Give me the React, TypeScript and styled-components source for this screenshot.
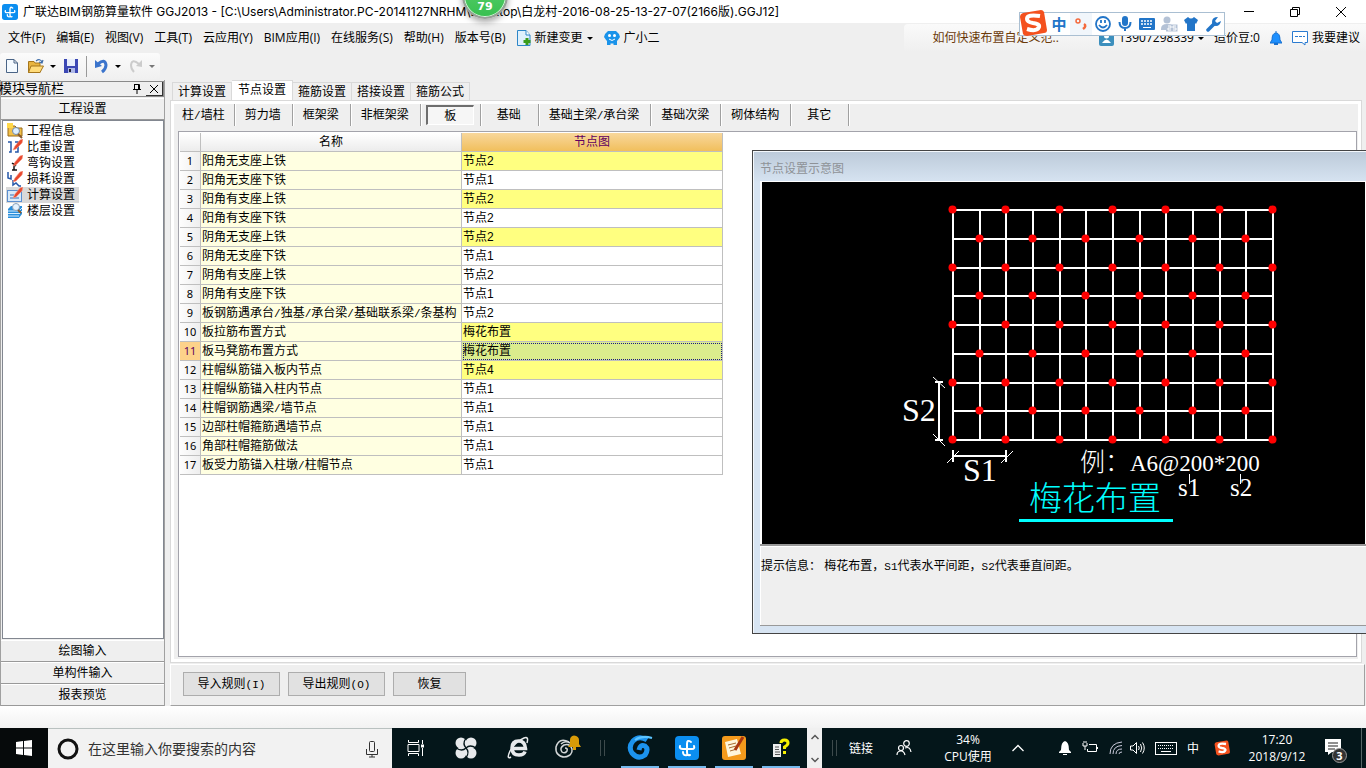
import React from "react";
import styled, { createGlobalStyle, css } from "styled-components";

const ui = `"Open Sans", "Noto Sans CJK SC", sans-serif`;
const song = `"Liberation Sans", "Noto Sans CJK SC", sans-serif`;

const Global = createGlobalStyle`
  * { box-sizing: border-box; }
  body { margin: 0; background: #efefef; color: #000; font: 12px/16px ${song}; }
  button { margin: 0; padding: 0; border: 0; background: none; color: inherit; font: inherit; white-space: nowrap; }
  svg { display: block; flex: none; }
`;

const Screen = styled.div`
  position: relative;
  display: flex;
  flex-direction: column;
  min-height: 100vh;
  overflow: hidden;
`;

/* Title bar */
const TitleBar = styled.header`
  display: flex;
  align-items: center;
  height: 23px;
  padding: 0 2px;
  background: #fff;
`;
const Title = styled.h1`
  flex: 1;
  margin: 0 0 0 5px;
  font: 12px/16px "Inter", "Noto Sans CJK SC", sans-serif;
  white-space: nowrap;
`;
const WindowButton = styled.button`
  display: flex;
  justify-content: center;
  width: 46px;
`;
const Ball = styled.div`
  position: absolute;
  top: -27px;
  left: 462px;
  z-index: 3;
  width: 46px;
  height: 46px;
  padding-top: 24px;
  border: 2px solid #9a9f9a;
  border-radius: 50%;
  background: linear-gradient(#5fd070, #38c050);
  box-shadow: 0 3px 6px rgba(0, 0, 0, 0.35), inset 0 0 0 1px #d8f5dc;
  color: #fff;
  font: bold 11px/16px "DejaVu Sans", sans-serif;
  text-align: center;
`;

/* Menu bar */
const MenuBar = styled.nav`
  display: flex;
  align-items: center;
  gap: 1px;
  height: 30px;
  padding-left: 3px;
  font: 12px/16px ${ui};
`;
const MenuItem = styled.button`
  display: flex;
  align-items: center;
  gap: 4px;
  padding: 0 5px;
`;
const Account = styled.div`
  display: flex;
  align-items: center;
  height: 28px;
  margin-left: auto;
  padding: 0 1px 0 23px;
  border-radius: 4px 0 0 0;
  background: linear-gradient(#fafafa, #efefef);
`;
const News = styled.a`
  width: 167px;
  padding-left: 5px;
  color: #6b3a0a;
  text-decoration: none;
  white-space: nowrap;
`;

const Caret = styled.span<{ $dim?: boolean }>`
  width: 0;
  border: 3px solid transparent;
  border-top-color: ${(p) => (p.$dim ? "#777" : "#000")};
  border-bottom: 0;
`;

/* Tool bar */
const ToolBar = styled.div`
  display: flex;
  align-items: center;
  align-self: flex-start;
  gap: 8px;
  height: 26px;
  margin-bottom: 1px;
  padding: 0 5px 0 4px;
  border-radius: 3px;
  background: linear-gradient(#fbfbfb, #f0f0f0);
`;
const Tool = styled.button`
  display: flex;
  align-items: center;
  gap: 6px;
`;
const ToolRule = styled.span`
  width: 1px;
  height: 21px;
  background: #999;
`;

/* Sogou input bar */
const ImeBar = styled.div`
  position: absolute;
  top: 12px;
  right: 141px;
  z-index: 3;
  display: flex;
  align-items: center;
  height: 24px;
  padding: 0 0 0 28px;
  border: 1px solid #aabfd2;
  background: #fff;
  color: #2275c8;
`;
const ImeLogo = styled.span`
  position: absolute;
  top: -4px;
  left: -1px;
`;
const ImeKey = styled.button<{ $tint?: boolean }>`
  display: flex;
  align-items: center;
  justify-content: center;
  width: 22px;
  height: 22px;
  background: ${(p) => (p.$tint ? "#f1f6fb" : "none")};
  font: bold 15px/22px "Noto Sans CJK SC", sans-serif;
`;

/* Body */
const Body = styled.div`
  display: flex;
  flex: 1;
  min-height: 0;
`;
const Side = styled.aside`
  display: flex;
  flex-direction: column;
  width: 165px;
  padding-top: 1px;
  border-right: 1px solid #a0a0a0;
  border-left: 1px solid #a0a0a0;
`;
const SideHead = styled.div`
  display: flex;
  align-items: center;
  height: 16px;
  margin-bottom: 1px;
  border: 1px solid #8a8a8a;
  border-left: 0;
  font: 13px/16px ${song};
`;
const SideName = styled.span`
  flex: 1;
  margin-left: -2px;
`;
const CloseBox = styled.button`
  display: flex;
  align-items: center;
  justify-content: center;
  width: 17px;
  height: 14px;
  margin-left: 5px;
  border: solid #333;
  border-width: 0 1px 1px 0;
`;
const Section = styled.button`
  height: 22px;
  border-top: 1px solid #fff;
  border-bottom: 1px solid #999;
  text-align: center;
`;
const Modules = styled.ul`
  flex: 1;
  margin: 0 0 1px 1px;
  padding: 2px 3px;
  border: 1px solid #828790;
  background: #fff;
  list-style: none;
`;
const Module = styled.button<{ $on?: boolean }>`
  display: flex;
  align-items: center;
  gap: 4px;
  height: 16px;
  padding: 0 4px 0 1px;
  background: ${(p) => (p.$on ? "#d9d9d9" : "none")};
`;
const Work = styled.main`
  position: relative;
  display: flex;
  flex: 1;
  flex-direction: column;
  min-width: 0;
  padding: 0 1px 0 5px;
`;
const Tabs = styled.div`
  display: flex;
  align-items: flex-end;
  height: 20px;
  padding-left: 2px;
`;
const Tab = styled.button<{ $on?: boolean }>`
  height: 18px;
  padding: 1px 5px 0;
  border: 1px solid #d9d9d9;
  border-bottom: 0;
  border-left-width: 0;
  &:first-child { border-left-width: 1px; }
  ${(p) =>
    p.$on &&
    css`
      height: 20px;
      padding: 0 6px 2px;
      background: #fff;
    `}
`;
const Page = styled.section`
  display: flex;
  flex: 1;
  flex-direction: column;
  margin-right: 3px;
  border: 1px solid #d9d9d9;
  outline: 3px solid #fff;
  outline-offset: -4px;
  padding: 3px 4px 5px 7px;
`;
const Kinds = styled.div`
  display: flex;
  height: 22px;
  margin: 0 0 5px -4px;
`;
const KindCell = styled.div`
  display: flex;
  align-items: center;
  justify-content: center;
  min-width: 58px;
  padding: 0 11px 0 10px;
  border-right: 1px solid #a0a0a0;
  box-shadow: 1px 0 #fff;
  white-space: nowrap;
  &:first-child { padding: 0 9px 0 8px; }
`;
const Kind = styled.button<{ $on?: boolean }>`
  ${(p) =>
    p.$on &&
    css`
      width: 48px;
      height: 20px;
      margin: 0 -5px;
      border: 1px solid #fff;
      border-top: 2px solid #6e6e6e;
      border-left: 2px solid #6e6e6e;
      background: #f6f6f6;
    `}
`;
const Canvas = styled.div`
  flex: 1;
  padding: 1px;
  border: 1px solid #a3a3ab;
  background: #fff;
`;

/* Node table */
const Table = styled.table`
  width: 543px;
  border-collapse: separate;
  border-spacing: 0;
  table-layout: fixed;
`;
const HeadCell = styled.th<{ $w: number; $hot?: boolean }>`
  width: ${(p) => p.$w}px;
  height: 19px;
  padding: 0;
  border-right: 1px solid #bfbfbf;
  border-bottom: 1px solid #bfbfbf;
  background: ${(p) => (p.$hot ? "linear-gradient(#f8d79c, #f1bf5c)" : "linear-gradient(#fff, #ececec)")};
  color: ${(p) => (p.$hot ? "#600060" : "#000")};
  font-weight: normal;
`;
const RowNo = styled.th<{ $hot?: boolean }>`
  height: 19px;
  padding: 0;
  border-right: 1px solid #bfbfbf;
  border-bottom: 1px solid #bfbfbf;
  background: ${(p) => (p.$hot ? "#fdd28a" : "linear-gradient(90deg, #fdfdfd, #eee)")};
  color: ${(p) => (p.$hot ? "#600060" : "#000")};
  font: 11px/16px "Noto Sans", sans-serif;
`;
const Cell = styled.td<{ $fill: string; $focus?: boolean }>`
  height: 19px;
  padding: 0 0 0 1px;
  overflow: hidden;
  border-right: 1px solid #bfbfbf;
  border-bottom: 1px solid #bfbfbf;
  background: ${(p) => p.$fill};
  outline: ${(p) => (p.$focus ? "1px dotted #1a1a80" : "none")};
  outline-offset: -2px;
  white-space: nowrap;
`;

const Actions = styled.footer`
  display: flex;
  gap: 8px;
  margin: 1px 0 0;
  padding: 7px 12px 9px;
  border: 1px solid #a0a0a0;
  border-top-color: #fff;
  border-left-color: #fff;
`;
const Action = styled.button<{ $w: number }>`
  width: ${(p) => p.$w}px;
  height: 24px;
  border: 1px solid #adadad;
  background: #e1e1e1;
`;
const Half = styled.span`
  font: 11px/16px "Liberation Mono", monospace;
`;

/* Node preview window */
const Preview = styled.section`
  position: absolute;
  top: 70px;
  right: 0;
  left: 587px;
  padding: 1px 0 7px 7px;
  border: 1px solid #444;
  border-right: 0;
  background: linear-gradient(#bccad9, #d7e4f2 32px);
  box-shadow: inset 1px 1px #f4f8fc;
`;
const PreviewTitle = styled.h2`
  height: 29px;
  margin: 0;
  padding-top: 9px;
  color: #8e9297;
  font: 12px/16px ${song};
`;
const Board = styled.div`
  overflow: hidden;
  border: solid #fff;
  border-width: 1px 1px 0 2px;
  background: #000;
`;
const Hint = styled.p`
  height: 82px;
  margin: 0;
  padding: 12px 0 0 1px;
  border-top: 2px solid #999;
  border-bottom: 1px solid #999;
  background: #efefef;
  box-shadow: inset 1px 1px #fff;
`;

/* Task bar */
const Strip = styled.div`
  height: 22px;
  background: linear-gradient(#fff, #f2f2f2);
`;
const TaskBar = styled.footer`
  display: flex;
  height: 40px;
  background: #04161a;
  color: #fff;
  font: 12px/17px ${ui};
`;
const Start = styled.button`
  display: flex;
  flex: none;
  align-items: center;
  justify-content: center;
  width: 48px;
  background: #060a0b;
`;
const Search = styled.label`
  display: flex;
  flex: none;
  align-items: center;
  gap: 8px;
  width: 344px;
  padding: 0 13px 0 8px;
  border-top: 1px solid #b9c1c0;
  background: #f2f2f2;
  input {
    flex: 1;
    min-width: 0;
    border: 0;
    padding: 0;
    outline: 0;
    background: none;
    font: 14px/20px ${ui};
  }
  input::placeholder { color: #333; opacity: 1; }
`;
const Launch = styled.button<{ $w: number; $run?: boolean }>`
  display: flex;
  flex: none;
  align-items: center;
  justify-content: center;
  width: ${(p) => p.$w}px;
  margin-right: ${(p) => (p.$run ? 9 : 0)}px;
  box-shadow: ${(p) => (p.$run ? "inset 0 -2px #76b9ed" : "none")};
`;
const Grip = styled.span<{ $l: number; $r: number }>`
  flex: none;
  align-self: center;
  width: 5px;
  height: 16px;
  margin: 0 ${(p) => p.$r}px 0 ${(p) => p.$l}px;
  border: solid #3d4a4c;
  border-width: 0 1px;
`;
const Scroller = styled.div`
  display: flex;
  flex: none;
  flex-direction: column;
  align-items: center;
  justify-content: space-between;
  width: 15px;
  margin-left: -2px;
  padding: 6px 0 5px;
  background: #f0f0f0;
`;
const Tray = styled.div`
  display: flex;
  flex: 1;
  align-items: center;
  justify-content: flex-end;
  padding-right: 5px;
`;
const TrayItem = styled.button<{ $w: number; $gap?: number }>`
  display: flex;
  flex: none;
  justify-content: center;
  width: ${(p) => p.$w}px;
  margin-left: ${(p) => p.$gap ?? 0}px;
  text-align: center;
  white-space: pre;
`;
const Notices = styled.button`
  position: relative;
  height: 40px;
  margin-left: 13px;
  padding: 0 18px 0 1px;
  border-right: 1px solid #566;
`;
const Count = styled.span`
  position: absolute;
  top: 20px;
  left: 8px;
  width: 15px;
  height: 15px;
  border: 1px solid #999;
  border-radius: 50%;
  background: #333;
  font: bold 11px/13px ${ui};
`;

const Glodon = ({ s }: { s: number }) => (
  <svg width={s} height={s} viewBox="0 0 24 24">
    <rect width="24" height="24" rx="4" fill="#0b8ef0" />
    <path d="M16 6Q12 3 12 8V16Q12 20 15 19M5 10Q4 13 8 13H17Q20 13 19 10M12 19Q8 20 8 16" fill="none" stroke="#fff" strokeWidth="2" strokeLinecap="round" />
  </svg>
);
const SogouS = ({ s }: { s: number }) => (
  <svg width={s} height={s} viewBox="0 0 28 28">
    <path d="M4 4L22 1Q24 1 25 3L28 21Q28 24 25 24L8 27Q5 27 4 25L1 8Q1 5 4 4Z" fill="#f4511e" />
    <path d="M21 7Q8 5 8 10Q8 13 14 14Q21 15 20 18Q18 23 8 20" fill="none" stroke="#fff" strokeWidth="4" />
  </svg>
);
const Pencil = () => <path d="M6 11L8 7L13 1L16 0L15 4L9 10Z" fill="#e8482e" stroke="#f79a86" strokeWidth="0.600" />;

/* Slashes take the half-width cell that they have in a Song typeface */
const Label = ({ text }: { text: string }) => (
  <>
    {text.split(/(\/)/).map((part, i) => (part === "/" ? <Half key={i}>/</Half> : part))}
  </>
);

const moduleIcons = [
  <g key="a"><path d="M1 3H8L10 5H15V13H1Z" fill="#f2c14a" stroke="#9a6b16" /><path d="M0 0H6V5H0Z" fill="#ffd84a" /><circle cx="9" cy="8" r="3.500" fill="#dcefff" stroke="#7388a5" /><path d="M11 11L15 15" stroke="#8a5a2a" strokeWidth="2" /></g>,
  <g key="b"><path d="M1 3H4V13H2M8 3H11V13H8" fill="none" stroke="#2457a8" strokeWidth="1.500" /><Pencil /></g>,
  <g key="c"><path d="M7 8V15M5 15H10M5 8L9 11" fill="none" stroke="#111" strokeWidth="1.500" /><Pencil /></g>,
  <g key="d"><path d="M1 1V7L4 8V4M6 9V14L9 12L12 15H14" fill="none" stroke="#2457a8" strokeWidth="1.500" /><Pencil /></g>,
  <g key="e"><rect x="0.500" y="3.500" width="14" height="11" fill="#d8eafa" stroke="#5b8fd0" /><path d="M3 8H7M3 11H12" stroke="#3a70b8" /><Pencil /></g>,
  <g key="f"><path d="M1 6L4 3H15V11L12 15H1Z" fill="#2b8fdc" /><path d="M1 8H12M1 10.500H12M1 13H12M12 8L15 5M12 11L15 8" stroke="#d8efff" /><circle cx="9" cy="4" r="3.500" fill="#e4f3ff" stroke="#8aa0b8" /><path d="M11 7L14 10" stroke="#8a5a2a" strokeWidth="2" /></g>,
];

const menus = ["文件(F)", "编辑(E)", "视图(V)", "工具(T)", "云应用(Y)", "BIM应用(I)", "在线服务(S)", "帮助(H)", "版本号(B)"];
const modules = ["工程信息", "比重设置", "弯钩设置", "损耗设置", "计算设置", "楼层设置"];
const tabs = ["计算设置", "节点设置", "箍筋设置", "搭接设置", "箍筋公式"];
const kinds = ["柱/墙柱", "剪力墙", "框架梁", "非框架梁", "板", "基础", "基础主梁/承台梁", "基础次梁", "砌体结构", "其它"];
const rows: [string, string, boolean?][] = [
  ["阳角无支座上铁", "节点2", true],
  ["阳角无支座下铁", "节点1"],
  ["阳角有支座上铁", "节点2", true],
  ["阳角有支座下铁", "节点2"],
  ["阴角无支座上铁", "节点2", true],
  ["阴角无支座下铁", "节点1"],
  ["阴角有支座上铁", "节点2"],
  ["阴角有支座下铁", "节点1"],
  ["板钢筋遇承台/独基/承台梁/基础联系梁/条基构", "节点2"],
  ["板拉筋布置方式", "梅花布置", true],
  ["板马凳筋布置方式", "梅花布置", true],
  ["柱帽纵筋锚入板内节点", "节点4", true],
  ["柱帽纵筋锚入柱内节点", "节点1"],
  ["柱帽钢筋遇梁/墙节点", "节点1"],
  ["边部柱帽箍筋遇墙节点", "节点1"],
  ["角部柱帽箍筋做法", "节点1"],
  ["板受力筋锚入柱墩/柱帽节点", "节点1"],
];

const gx = (i: number) => 191 + Math.round((i * 80) / 3);
const gy = (j: number) => 28 + Math.round((j * 115) / 4);
const range = (n: number) => Array.from({ length: n }, (_, i) => i);

const Diagram = () => (
  <svg width="603" height="362" viewBox="0 0 603 362" fontFamily={`"Liberation Serif", "Noto Sans CJK SC", serif`} fill="#fff">
    <g stroke="#fff" strokeWidth="2">
      {range(13).map((i) => <path key={i} d={`M${gx(i)} 27V259`} />)}
      {range(9).map((j) => <path key={j} d={`M190 ${gy(j)}H512`} />)}
      <path d="M177 200V258M173 200H181M173 258H181M191 274H244M191 268V280M244 268V280" />
    </g>
    <path d="M171 195L183 206M171 252L183 264M185 281L197 269M239 281L251 269M427.500 292V302M478.500 292V302" stroke="#fff" />
    <g fill="#f00">
      {range(9).flatMap((j) =>
        range(13)
          .filter((i) => i % 2 === j % 2)
          .map((i) => <circle key={`${i}-${j}`} cx={gx(i) - 0.5} cy={gy(j) - 0.5} r="4" />)
      )}
    </g>
    <text x="140" y="239" fontSize="32">S2</text>
    <text x="201" y="299" fontSize="32">S1</text>
    <text x="318" y="289" fontSize="25" fontWeight="300">例：</text>
    <text x="368" y="289" fontSize="23">A6@200*200</text>
    <text x="416" y="314" fontSize="25">s1</text>
    <text x="468" y="314" fontSize="25">s2</text>
    <text x="267" y="328" fontSize="33" fontWeight="300" fill="#0ff">梅花布置</text>
    <path d="M257 338.500H411" stroke="#0ff" strokeWidth="3" />
  </svg>
);

export default function App() {
  return (
    <Screen>
      <Global />
      <TitleBar>
        <Glodon s={16} />
        <Title>广联达BIM钢筋算量软件 GGJ2013 - [C:\Users\Administrator.PC-20141127NRHM\Desktop\白龙村-2016-08-25-13-27-07(2166版).GGJ12]</Title>
        <WindowButton aria-label="最小化"><svg width="10" height="10"><path d="M0 4.500H10" stroke="#000" /></svg></WindowButton>
        <WindowButton aria-label="还原"><svg width="10" height="10" fill="none" stroke="#000"><path d="M.5 2.500H7.500V9.500H.5ZM2.500 2.500V.5H9.500V7.500H7.500" /></svg></WindowButton>
        <WindowButton aria-label="关闭"><svg width="10" height="10"><path d="M0 0L10 10M10 0L0 10" stroke="#000" /></svg></WindowButton>
      </TitleBar>
      <Ball>79</Ball>

      <ImeBar>
        <ImeLogo><SogouS s={28} /></ImeLogo>
        <ImeKey>中</ImeKey>
        <ImeKey $tint aria-label="标点"><svg width="12" height="14" fill="none" stroke="#f4693c"><circle cx="3" cy="4" r="2" strokeWidth="1.500" /><path d="M9 7Q12 9 8 12" strokeWidth="2.500" /></svg></ImeKey>
        <ImeKey aria-label="表情"><svg width="16" height="16" fill="none" stroke="#2275c8" strokeWidth="1.800"><circle cx="8" cy="8" r="7" /><path d="M4 9Q8 14 12 9M6 4V7M10 4V7" /></svg></ImeKey>
        <ImeKey aria-label="语音"><svg width="14" height="16"><rect x="4" width="6" height="10" rx="3" fill="#2275c8" /><path d="M1.500 6Q1.500 12 7 12T12.500 6M7 12V15" fill="none" stroke="#2275c8" strokeWidth="2" /></svg></ImeKey>
        <ImeKey aria-label="键盘"><svg width="16" height="12"><rect width="16" height="12" rx="1" fill="#2275c8" /><path d="M2 3H14M2 6H14" stroke="#fff" strokeWidth="1.500" strokeDasharray="2 1" /><path d="M4 9.500H12" stroke="#fff" /></svg></ImeKey>
        <ImeKey aria-label="账户"><svg width="17" height="16" fill="#b4c2d6"><circle cx="6" cy="4" r="3.500" /><path d="M0 13Q0 8 6 8Q11 8 12 10H5V14H0Z" /><path d="M5 8.500H16.500V15.500H5Z" /><path d="M7 10H10V12H7V14H10M15 10H12V12H15V14H12" fill="none" stroke="#fff" /></svg></ImeKey>
        <ImeKey aria-label="皮肤"><svg width="14" height="14"><path d="M4 0Q7 3 10 0L14 3L12 7L11 6V14H3V6L2 7L0 3Z" fill="#2275c8" /></svg></ImeKey>
        <ImeKey aria-label="工具"><svg width="15" height="15"><path d="M2 13L8 7" stroke="#2275c8" strokeWidth="3.500" strokeLinecap="round" /><path d="M12 0Q6 0 6 5Q6 9 10 9Q14 9 15 4L11 6L9 4Z" fill="#2275c8" /></svg></ImeKey>
      </ImeBar>

      <MenuBar>
        {menus.map((m) => <MenuItem key={m}>{m}</MenuItem>)}
        <MenuItem>
          <svg width="14" height="16"><path d="M.5.5H9L13 5V15.500H.5Z" fill="#dff0fc" stroke="#2d86c8" /><path d="M9 .5V5H13" fill="#fff" stroke="#2d86c8" /><path d="M10 8V15M6.500 11.500H13.500" stroke="#3a9c1c" strokeWidth="3" /></svg>
          新建变更
          <Caret />
        </MenuItem>
        <MenuItem>
          <svg width="16" height="16"><path d="M4 1H12Q15 3 16 7Q14 10 13 11V15H9.500V13.500H6.500V15H3V11Q2 10 0 7Q1 3 4 1Z" fill="#1a93ea" /><circle cx="5.500" cy="5.500" r="1.500" fill="#fff" /><circle cx="10.500" cy="5.500" r="1.500" fill="#fff" /><path d="M5 9Q8 12 11 9" fill="none" stroke="#fff" /></svg>
          广小二
        </MenuItem>
        <Account>
          <News href="#">如何快速布置自定义范..</News>
          <MenuItem>
            <svg width="15" height="15"><rect width="15" height="15" rx="2" fill="#3c8fbd" /><circle cx="7.500" cy="5" r="2.500" fill="#fff" /><path d="M3 12Q7.500 5 12 12Z" fill="#fff" /></svg>
            <span>13907298339</span>
            <Caret />
          </MenuItem>
          <MenuItem>造价豆:0</MenuItem>
          <MenuItem aria-label="提醒"><svg width="12" height="14"><path d="M6 0V2Q2 2 2 9L0 12H12L10 9Q10 2 6 2" fill="#1e90ff" stroke="#1670d0" /><path d="M4 13H8" stroke="#1670d0" strokeWidth="2" /></svg></MenuItem>
          <MenuItem><svg width="16" height="16" fill="none" stroke="#2b7bd0"><path d="M.5 1.500H15.500V12.500H13V15L10 12.500H.5Z" fill="#fff" /><path d="M3 6.500H13" strokeDasharray="3 1" /></svg>我要建议</MenuItem>
        </Account>
      </MenuBar>

      <ToolBar>
        <Tool aria-label="新建"><svg width="16" height="16"><path d="M2.500 1.500H10L13.500 5V14.500H2.500Z" fill="#f4faff" stroke="#4a6486" /><path d="M10 1.500V5H13.500" fill="none" stroke="#4a6486" /></svg></Tool>
        <Tool aria-label="打开"><svg width="16" height="16"><path d="M.5 3.500H6L7 5H12V14.500H.5Z" fill="#e8b440" stroke="#a5761c" /><path d="M3 8H15.500L12 14.500H.5Z" fill="#ffdb7a" stroke="#a5761c" /><path d="M8 3Q12 0 14 4M15 2L14 5L11 4" fill="none" stroke="#3d6ca8" strokeWidth="1.200" /></svg><Caret /></Tool>
        <Tool aria-label="保存"><svg width="14" height="16"><path d="M0 1H14V15H0Z" fill="#3c48b4" /><path d="M3 1H11V8H3Z" fill="#e8eefc" /><path d="M4 10H11V15H4Z" fill="#aeb8e8" /><path d="M5 11H7V14H5Z" fill="#223" /></svg></Tool>
        <ToolRule />
        <Tool aria-label="撤销"><svg width="14" height="16"><path d="M3 6Q10 0 11 7Q11 11 7 14" fill="none" stroke="#3b74cc" strokeWidth="3" /><path d="M0 2V10L7 8Z" fill="#3b74cc" /></svg><Caret /></Tool>
        <Tool aria-label="重做"><svg width="14" height="16"><path d="M10 6Q3 0 2 7Q2 11 5 14" fill="none" stroke="#ccc" strokeWidth="2" /><path d="M13 2V9L7 8Z" fill="#ccc" /></svg><Caret $dim /></Tool>
      </ToolBar>

      <Body>
        <Side>
          <SideHead>
            <SideName>模块导航栏</SideName>
            <svg width="8" height="10" fill="none" stroke="#000"><path d="M1 .5H6.500V5.500M1.500 .5V5.500M0 5.500H8M4 6V10M5.500 1V5" /></svg>
            <CloseBox aria-label="关闭"><svg width="8" height="8"><path d="M0 0L8 8M8 0L0 8" stroke="#000" /></svg></CloseBox>
          </SideHead>
          <Section>工程设置</Section>
          <Modules>
            {modules.map((m, i) => (
              <li key={m}>
                <Module $on={i === 4}><svg width="16" height="16">{moduleIcons[i]}</svg>{m}</Module>
              </li>
            ))}
          </Modules>
          <Section>绘图输入</Section>
          <Section>单构件输入</Section>
          <Section>报表预览</Section>
        </Side>

        <Work>
          <Tabs role="tablist">
            {tabs.map((t, i) => <Tab key={t} role="tab" aria-selected={i === 1} $on={i === 1}>{t}</Tab>)}
          </Tabs>
          <Page>
            <Kinds>
              {kinds.map((k) => <KindCell key={k}><Kind $on={k === "板"}><Label text={k} /></Kind></KindCell>)}
            </Kinds>
            <Canvas>
              <Table>
                <thead>
                  <tr>
                    <HeadCell $w={21} aria-label="序号" />
                    <HeadCell $w={261}>名称</HeadCell>
                    <HeadCell $w={261} $hot>节点图</HeadCell>
                  </tr>
                </thead>
                <tbody>
                  {rows.map(([name, node, changed], i) => (
                    <tr key={name}>
                      <RowNo $hot={i === 10}>{i + 1}</RowNo>
                      <Cell $fill="#ffffe1"><Label text={name} /></Cell>
                      <Cell $fill={i === 10 ? "#dbec8d" : changed ? "#ffff80" : "#fff"} $focus={i === 10}>{node}</Cell>
                    </tr>
                  ))}
                </tbody>
              </Table>
            </Canvas>
          </Page>
          <Actions>
            <Action $w={97}>导入规则<Half>(I)</Half></Action>
            <Action $w={97}>导出规则<Half>(O)</Half></Action>
            <Action $w={73}>恢复</Action>
          </Actions>
          <Preview>
            <PreviewTitle>节点设置示意图</PreviewTitle>
            <Board><Diagram /></Board>
            <Hint>提示信息： 梅花布置，<Half>S1</Half>代表水平间距，<Half>S2</Half>代表垂直间距。</Hint>
          </Preview>
        </Work>
      </Body>
      <Strip />

      <TaskBar>
        <Start aria-label="开始"><svg width="16" height="16" fill="#fff"><path d="M0 2L7 1V7.500H0ZM8 1L16 0V7.500H8ZM0 8.500H7V15L0 14ZM8 8.500H16V16L8 15Z" /></svg></Start>
        <Search>
          <svg width="24" height="24"><circle cx="12" cy="12" r="9" fill="none" stroke="#111" strokeWidth="3" /></svg>
          <input type="text" placeholder="在这里输入你要搜索的内容" aria-label="搜索" />
          <svg width="14" height="18" fill="none" stroke="#333"><rect x="4.500" y="1.500" width="5" height="10" rx="1" /><path d="M1.500 9V14.500H12.500V9M7 14V17M4 17H10" /></svg>
        </Search>
        <Launch $w={48} aria-label="任务视图"><svg width="18" height="16" fill="none" stroke="#fff"><path d="M1 4.500H12V11.500H1ZM1.500 0V2.500H11.500V0M1.500 16V13.500H11.500V16M15.500 0V4M15.500 8V16" /><path d="M14 4.500H17V7.500H14Z" fill="#fff" stroke="none" /></svg></Launch>
        <Launch $w={52} aria-label="浏览器"><svg width="22" height="22"><g fill="#e8eaec"><circle cx="6" cy="6" r="5.500" /><circle cx="16" cy="6" r="5.500" /><circle cx="6" cy="16" r="5.500" /><circle cx="16" cy="16" r="5.500" /><path d="M6 6H16V16H6Z" /></g><path d="M11 11Q7 7 11 1M11 11Q15 7 21 11M11 11Q15 15 11 21M11 11Q7 15 1 11" fill="none" stroke="#04161a" strokeWidth="1.300" /></svg></Launch>
        <Launch $w={52} aria-label="IE"><svg width="22" height="24" fill="none" stroke="#e8eaec"><path d="M5 12.500H18.500Q18 5 11.500 5Q5 5 5 12Q5 19 12 19Q17 19 18 15.500" strokeWidth="3.500" /><path d="M4 21Q-1 24 3 15Q8 6 17 2Q22 0 20 7" strokeWidth="1.500" /></svg></Launch>
        <Launch $w={48} aria-label="消息"><svg width="28" height="28" fill="none" stroke="#d4d7d8" strokeWidth="1.500"><path d="M15 8Q5 3 2 13Q1 22 10 23Q19 22 18 15Q16 9 10 11Q5 14 8 18Q11 20 13 17Q14 14 11 14M7 10Q11 6 16 9M3 19Q8 26 16 21" /><path d="M14 13L16 10V6Q16 2 20 1.500Q25 2 25 6V10L27 13ZM19 13H22V16H19Z" fill="#d89b08" stroke="none" /></svg></Launch>
        <Grip $l={8} $r={16} />
        <Launch $w={38} $run aria-label="广联达G"><svg width="26" height="26" fill="none"><path d="M20 5Q12 0 6 6Q1 12 5 18Q11 25 18 20Q22 14 18 11Q13 9 12 15" stroke="#1c93ee" strokeWidth="5" /><path d="M8 5Q15 0 25 3" stroke="#5cc4ff" strokeWidth="2" /></svg></Launch>
        <Launch $w={38} $run aria-label="钢筋算量"><Glodon s={24} /></Launch>
        <Launch $w={38} $run aria-label="记事"><svg width="24" height="24"><rect width="24" height="24" rx="3" fill="#f49a1c" /><path d="M3 6L15 3L19 18L6 21Z" fill="#fff6dc" /><path d="M6 9L14 7M7 12L14 10M8 15L15 13" stroke="#a66b30" /><path d="M21 1L13 14" stroke="#a83610" strokeWidth="3" /></svg></Launch>
        <Launch $w={38} $run aria-label="帮助"><svg width="18" height="20"><path d="M1 6H9V19H1Z" fill="#eee" /><path d="M3 9H7M3 11.500H7M3 14H8M3 16.500H8" stroke="#555" /><path d="M9 5Q9 2 12.500 2Q16 2 16 5Q16 7 12.500 9V11M12.500 13V16" fill="none" stroke="#f6f000" strokeWidth="3" /></svg></Launch>
        <Scroller>
          <svg width="8" height="6" fill="none" stroke="#555" strokeWidth="1.500"><path d="M.5 5L4 1.500L7.500 5" /></svg>
          <svg width="8" height="6" fill="none" stroke="#555" strokeWidth="1.500"><path d="M.5 1L4 4.500L7.500 1" /></svg>
        </Scroller>
        <Grip $l={10} $r={0} />
        <Tray>
          <TrayItem $w={48}>链接</TrayItem>
          <TrayItem $w={38} aria-label="人脉"><svg width="16" height="16" fill="none" stroke="#fff" strokeWidth="1.200"><circle cx="10.500" cy="3.500" r="2.800" /><circle cx="5" cy="8" r="2.500" /><path d="M1 15Q1 11 5 11Q8 11 9 15M9 8Q14 6 15 12" /></svg></TrayItem>
          <TrayItem $w={90}>{"34%\nCPU使用"}</TrayItem>
          <TrayItem $w={10} aria-label="更多"><svg width="12" height="8" fill="none" stroke="#fff" strokeWidth="1.300"><path d="M.5 7L6 1.500L11.500 7" /></svg></TrayItem>
          <TrayItem $w={24} $gap={30} aria-label="通知"><svg width="12" height="14"><path d="M6 0Q2 1 2 9L0 11V12H12V11L10 9Q10 1 6 0ZM4 13H8V14H4Z" fill="#fff" /></svg></TrayItem>
          <TrayItem $w={26} aria-label="电源"><svg width="16" height="14" fill="none" stroke="#fff"><path d="M7 3.500H14.500V10.500H5.500V8M15.500 6V8M1 2V5H5V2M2 0V2M4 0V2M3 5V9" /></svg></TrayItem>
          <TrayItem $w={26} aria-label="网络"><svg width="14" height="14" fill="none" stroke="#ccd"><path d="M1 13Q1 2 13 1M4 13Q4 5 13 4.500M7 13Q7 8 13 8M10 13Q10 11 13 11" /></svg></TrayItem>
          <TrayItem $w={18} aria-label="音量"><svg width="16" height="14" fill="none" stroke="#fff"><path d="M.5 5V9H3L6.500 12.500V1.500L3 5ZM8.500 5Q10 7 8.500 9M10.500 3Q13 7 10.500 11M12.500 1.500Q16 7 12.500 12.500" /></svg></TrayItem>
          <TrayItem $w={38} aria-label="键盘"><svg width="22" height="13" fill="none" stroke="#fff"><rect x=".5" y=".5" width="21" height="12" /><path d="M3 3.500H19M3 6.500H19" strokeDasharray="1 1" /><path d="M6 9.500H16" /></svg></TrayItem>
          <TrayItem $w={16}>中</TrayItem>
          <TrayItem $w={42} aria-label="搜狗"><SogouS s={16} /></TrayItem>
          <TrayItem $w={68}>{"17:20\n2018/9/12"}</TrayItem>
          <Notices aria-label="通知中心">
            <svg width="18" height="18"><path d="M0 0H16V13H7L3 16V13H0Z" fill="#fff" /><path d="M3 4H13M3 7H13M3 10H10" stroke="#222" /></svg>
            <Count>3</Count>
          </Notices>
        </Tray>
      </TaskBar>
    </Screen>
  );
}
